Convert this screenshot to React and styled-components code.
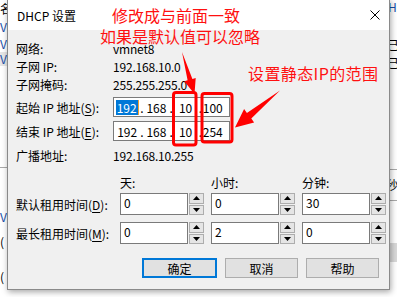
import React from "react";
import styled, { createGlobalStyle } from "styled-components";

const GlobalStyle = createGlobalStyle`
  html, body {
    margin: 0;
    padding: 0;
    background: #ffffff;
  }
  body {
    font-family: "Noto Sans CJK SC", "Noto Sans", sans-serif;
    font-size: 12px;
    color: #000;
  }
`;

const Desktop = styled.div`
  position: relative;
  width: 397px;
  height: 297px;
  overflow: hidden;
  background: #ffffff;
  display: flex;
  justify-content: space-between;
`;

const SidePane = styled.div`
  width: 8px;
  display: flex;
  flex-direction: column;
  overflow: hidden;
  background: #ffffff;
`;

const PaneLine = styled.div`
  height: ${(p) => p.$h}px;
  line-height: ${(p) => p.$h}px;
  font-size: 12px;
  white-space: nowrap;
  color: ${(p) => p.$color || "#000"};
  background: ${(p) => p.$bg || "transparent"};
  border-bottom: ${(p) => (p.$line ? "1px solid #a9a9a9" : "none")};
  text-indent: ${(p) => p.$indent || 0}px;
`;

const Dialog = styled.div`
  position: absolute;
  left: 7px;
  top: -1px;
  width: 381px;
  height: 289px;
  border: 1px solid #8a8a8a;
  background: #f0f0f0;
  box-shadow: 1px 2px 6px rgba(0, 0, 0, 0.35);
  display: flex;
  flex-direction: column;
`;

const TitleBar = styled.div`
  height: 30px;
  flex: none;
  background: #ffffff;
  display: flex;
  align-items: center;
  justify-content: space-between;
  padding: 0 9px 0 9px;
  font-size: 12px;
`;

const Body = styled.div`
  padding: 9px 10px 0 8px;
  display: flex;
  flex-direction: column;
`;

const Row = styled.div`
  display: grid;
  grid-template-columns: 97px auto;
  align-items: center;
  height: ${(p) => p.$h}px;
  margin-top: ${(p) => p.$mt || 0}px;
  white-space: nowrap;
`;

const TimeRow = styled.div`
  display: grid;
  grid-template-columns: 97px 84px 84px 84px;
  column-gap: 7px;
  align-items: center;
  height: ${(p) => p.$h}px;
  margin-top: ${(p) => p.$mt || 0}px;
  white-space: nowrap;
`;

const Value = styled.span`
  letter-spacing: -0.2px;
`;

const Key = styled.span`
  text-decoration: underline;
  text-underline-offset: 2px;
`;

const IpBox = styled.div`
  width: 115px;
  height: 18px;
  border: 1px solid #7a7a7a;
  background: #ffffff;
  display: flex;
  align-items: center;
`;

const IpField = styled.div`
  flex: 1;
  display: flex;
  justify-content: ${(p) => (p.$left ? "flex-start" : "center")};
  padding-left: ${(p) => (p.$left ? 1 : 0)}px;
`;

const Selected = styled.span`
  background: #0078d7;
  color: #ffffff;
  padding: 0 1px;
  line-height: 15px;
  border-right: 1px solid #f0a030;
`;

const Dot = styled.span`
  width: 3px;
  text-align: center;
`;

const Spin = styled.div`
  display: flex;
  gap: 1px;
  height: 22px;
`;

const SpinInput = styled.div`
  width: 64px;
  height: 20px;
  border: 1px solid #7a7a7a;
  background: #ffffff;
  padding: 0 0 0 3px;
  line-height: 17px;
`;

const SpinButtons = styled.div`
  display: flex;
  flex-direction: column;
  gap: 1px;
  width: 15px;
`;

const SpinButton = styled.div`
  flex: 1;
  border: 1px solid #adadad;
  background: #e5e5e5;
  display: flex;
  align-items: center;
  justify-content: center;
`;

const Buttons = styled.div`
  display: flex;
  justify-content: flex-end;
  gap: 8px;
  margin-top: 14px;
`;

const Button = styled.div`
  width: 71px;
  height: ${(p) => (p.$default ? 16 : 18)}px;
  border: ${(p) => (p.$default ? "2px solid #0078d7" : "1px solid #adadad")};
  background: #e1e1e1;
  display: flex;
  align-items: center;
  justify-content: center;
  font-size: 12px;
`;

const Note = styled.div`
  position: absolute;
  left: ${(p) => p.$x}px;
  top: ${(p) => p.$y}px;
  color: #ff1010;
  font-size: 16px;
  line-height: 20px;
  white-space: nowrap;
  letter-spacing: ${(p) => p.$ls || 0}px;
`;

const Overlay = styled.svg`
  position: absolute;
  left: 0;
  top: 0;
  pointer-events: none;
`;

const Triangle = ({ down }) => (
  <svg width="7" height="4" viewBox="0 0 7 4">
    <path d={down ? "M0 0 L7 0 L3.5 4 Z" : "M0 4 L7 4 L3.5 0 Z"} fill="#000" />
  </svg>
);

const Spinner = ({ value }) => (
  <Spin>
    <SpinInput>{value}</SpinInput>
    <SpinButtons>
      <SpinButton>
        <Triangle />
      </SpinButton>
      <SpinButton>
        <Triangle down />
      </SpinButton>
    </SpinButtons>
  </Spin>
);

const IpControl = ({ parts, selectFirst }) => (
  <IpBox>
    <IpField>{selectFirst ? <Selected>{parts[0]}</Selected> : parts[0]}</IpField>
    <Dot>.</Dot>
    <IpField>{parts[1]}</IpField>
    <Dot>.</Dot>
    <IpField>{parts[2]}</IpField>
    <Dot>.</Dot>
    <IpField $left>{parts[3]}</IpField>
  </IpBox>
);

export default function App() {
  return (
    <>
      <GlobalStyle />
      <Desktop>
        <SidePane>
          <PaneLine $h={18}>名</PaneLine>
          <PaneLine $h={17} $color="#1a4fa8">V</PaneLine>
          <PaneLine $h={17} $color="#1a4fa8">V</PaneLine>
          <PaneLine $h={14} $color="#1a4fa8" $bg="#e6e6e6">V</PaneLine>
          <PaneLine $h={104} $line />
          <PaneLine $h={40} />
          <PaneLine $h={20} $color="#1a4fa8">V</PaneLine>
          <PaneLine $h={30}>(</PaneLine>
          <PaneLine $h={40}>(</PaneLine>
        </SidePane>
        <SidePane>
          <PaneLine $h={14} $color="#1a4fa8" $indent={-1}>He</PaneLine>
          <PaneLine $h={22} />
          <PaneLine $h={18} $indent={-2}>已</PaneLine>
          <PaneLine $h={18} $indent={-2}>已</PaneLine>
          <PaneLine $h={98} $line />
          <PaneLine $h={30} $line $indent={-3}>秒</PaneLine>
          <PaneLine $h={42} />
          <PaneLine $h={20} $bg="#d9d9d9" />
          <PaneLine $h={35} />
        </SidePane>

        <Dialog>
          <TitleBar>
            <span>DHCP 设置</span>
            <svg width="10" height="10" viewBox="0 0 10 10">
              <path d="M0.5 0.5 L9.5 9.5 M9.5 0.5 L0.5 9.5" stroke="#000" strokeWidth="1" />
            </svg>
          </TitleBar>
          <Body>
            <Row $h={18}>
              <span>网络:</span>
              <Value>vmnet8</Value>
            </Row>
            <Row $h={18}>
              <span>子网 IP:</span>
              <Value>192.168.10.0</Value>
            </Row>
            <Row $h={18}>
              <span>子网掩码:</span>
              <Value>255.255.255.0</Value>
            </Row>
            <Row $h={20} $mt={4}>
              <span>
                起始 IP 地址(<Key>S</Key>):
              </span>
              <IpControl parts={["192", "168", "10", "100"]} selectFirst />
            </Row>
            <Row $h={20} $mt={4}>
              <span>
                结束 IP 地址(<Key>E</Key>):
              </span>
              <IpControl parts={["192", "168", "10", "254"]} />
            </Row>
            <Row $h={18} $mt={5}>
              <span>广播地址:</span>
              <Value>192.168.10.255</Value>
            </Row>
            <TimeRow $h={18} $mt={9}>
              <span />
              <span>天:</span>
              <span>小时:</span>
              <span>分钟:</span>
            </TimeRow>
            <TimeRow $h={22} $mt={2}>
              <span>
                默认租用时间(<Key>D</Key>):
              </span>
              <Spinner value="0" />
              <Spinner value="0" />
              <Spinner value="30" />
            </TimeRow>
            <TimeRow $h={22} $mt={7}>
              <span>
                最长租用时间(<Key>M</Key>):
              </span>
              <Spinner value="0" />
              <Spinner value="2" />
              <Spinner value="0" />
            </TimeRow>
            <Buttons>
              <Button $default>确定</Button>
              <Button>取消</Button>
              <Button>帮助</Button>
            </Buttons>
          </Body>
        </Dialog>

        <Note $x={112} $y={5}>修改成与前面一致</Note>
        <Note $x={100} $y={26}>如果是默认值可以忽略</Note>
        <Note $x={248} $y={63} $ls={0.4}>设置静态IP的范围</Note>

        <Overlay width="397" height="297" viewBox="0 0 397 297">
          <rect x="173.5" y="92.5" width="22.5" height="52.5" rx="2.5" fill="none" stroke="#ff0000" strokeWidth="3" />
          <rect x="202" y="93.5" width="30" height="48.5" rx="2.5" fill="none" stroke="#ff0000" strokeWidth="3" />
          <path d="M182 52 L192.4 78.9 L195.7 77.9 L194.5 94 L184.3 81.3 L187.6 80.3 Z" fill="#ff0000" />
          <path d="M280 90.5 L251.3 118.5 L254.1 122.5 L235 127.5 L244.1 109 L246.9 113 Z" fill="#ff0000" />
        </Overlay>
      </Desktop>
    </>
  );
}
